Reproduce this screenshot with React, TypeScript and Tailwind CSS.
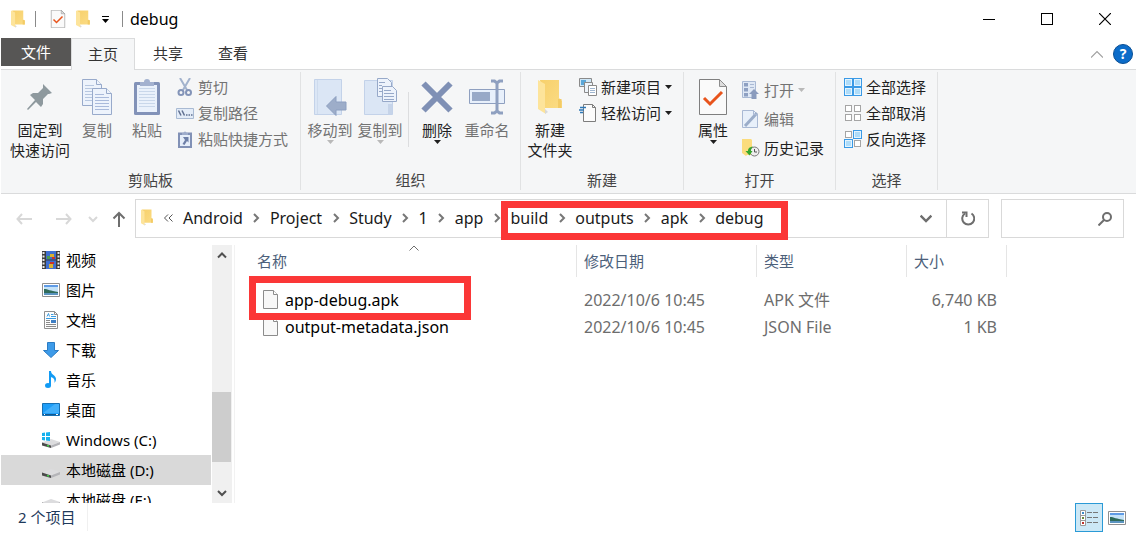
import type { ReactNode } from 'react'

const crumbs = ['Android', 'Project', 'Study', '1', 'app', 'build', 'outputs', 'apk', 'debug']

const files = [
  { name: 'app-debug.apk', date: '2022/10/6 10:45', type: 'APK 文件', size: '6,740 KB' },
  { name: 'output-metadata.json', date: '2022/10/6 10:45', type: 'JSON File', size: '1 KB' },
]

/* ---------- small glyphs ---------- */

function DownArrow({ className = '' }: { className?: string }) {
  return (
    <svg className={className} width="7" height="4" viewBox="0 0 7 4" fill="currentColor">
      <path d="M0 0h7L3.500 4z" />
    </svg>
  )
}

function Chevron({ d, size = 10, width = 2 }: { d: string; size?: number; width?: number }) {
  return (
    <svg width={size} height={size} viewBox="0 0 10 10" fill="none" stroke="currentColor" strokeWidth={width}>
      <path d={d} />
    </svg>
  )
}

function FolderIcon({ className = '' }: { className?: string }) {
  return (
    <svg className={className} viewBox="0 0 24 36" preserveAspectRatio="none">
      <defs>
        <linearGradient id="folderBack" x1="0" y1="0" x2="1" y2="1">
          <stop offset="0" stopColor="#f7d06b" />
          <stop offset="1" stopColor="#fbdc85" />
        </linearGradient>
      </defs>
      <path d="M2 1h19v18l3 3v7H6z" fill="url(#folderBack)" />
      <path d="M20 20h3.500v9H20z" fill="#f3cb66" />
      <path d="M0 1l7 4v25l1 5-8-5z" fill="#fde49b" />
      <path d="M7 30v5l3-2z" fill="#d8d8d8" />
    </svg>
  )
}

function PropertiesIcon({ className = '' }: { className?: string }) {
  return (
    <svg className={className} viewBox="0 0 28 36">
      <path d="M.5.500h20l7 7v28H.500z" fill="#fafafa" stroke="#7f7f7f" />
      <path d="M20.500.500v7h7z" fill="#ddd" stroke="#8d8d8d" />
      <path d="M5 19l6 6L23 13" fill="none" stroke="#e8541c" strokeWidth="3" />
    </svg>
  )
}

function PageIcon() {
  return (
    <svg className="shrink-0" width="15" height="19" viewBox="0 0 15 19">
      <path d="M.5.500h10l4 4v14H.500z" fill="#f8f8f8" stroke="#8c8c8c" />
      <path d="M10.500.500v4h4" fill="#fff" stroke="#8c8c8c" />
    </svg>
  )
}

function PinIcon() {
  return (
    <svg width="28" height="28" viewBox="0 0 28 28" fill="#8e999e">
      <path d="M17 1l9 9-3 1-1 0-5 5v5l-2 3-5-5L2 27l-1-1 8-9-5-5 3-2h5l5-5V4z" />
    </svg>
  )
}

function CopyIcon() {
  return (
    <svg width="32" height="38" viewBox="0 0 32 38" stroke="#98aacb" fill="#edf3fc">
      <path d="M1.500 1.500h14l5 5v21h-19z" />
      <path d="M15.500 1.500v5h5" />
      <path d="M4 7.500h9M4 10.500h13M4 13.500h8M4 16.500h8M4 19.500h8M4 22.500h8" stroke="#b7c7e0" />
      <path d="M11.500 10.500h14l5 5v21h-19z" />
      <path d="M25.500 10.500v5h5" />
      <path d="M14 16.500h9M14 19.500h14M14 22.500h14M14 25.500h14M14 28.500h14M14 31.500h14" stroke="#a9badb" />
    </svg>
  )
}

function PasteIcon() {
  return (
    <svg width="28" height="38" viewBox="0 0 28 38">
      <rect x="1" y="4" width="26" height="33" rx="1.500" fill="#8292b8" />
      <path d="M4 7h20v27H4z" fill="#eaf1fb" />
      <path d="M6 10.500h16M6 13.500h16M6 16.500h16M6 19.500h16M6 22.500h16M6 25.500h16M6 28.500h16" stroke="#c9d7ea" />
      <path d="M7 4h4a3 3 0 0 1 6 0h4v4H7z" fill="#a3b1cf" />
    </svg>
  )
}

function MoveToIcon() {
  return (
    <svg width="34" height="38" viewBox="0 0 34 38">
      <path d="M1.500 1.500h27v35h-27z" fill="#dbe6f5" stroke="#c3d2e9" />
      <path d="M4.500 2v34" stroke="#cedbed" />
      <path d="M13.500 28L23 18.500V24h10v8H23v5.500z" fill="#9dadc9" stroke="#8d9fc0" />
    </svg>
  )
}

function CopyToIcon() {
  return (
    <svg width="34" height="38" viewBox="0 0 34 38">
      <path d="M1.500 2.500h28v34h-28z" fill="#dbe6f5" stroke="#c3d2e9" />
      <path d="M25 26h4v10h-4z" fill="#c6d4e9" />
      <g fill="#edf3fc" stroke="#97a9c9">
        <path d="M14.500.500h10l4 4v14h-14z" />
        <path d="M16 4.500h6M16 7.500h3M16 10.500h3M16 13.500h3" />
        <path d="M19.500 8.500h10l4 4v11h-14z" />
        <path d="M21 12.500h7M21 15.500h10M21 18.500h10M21 21.500h10" />
      </g>
    </svg>
  )
}

function DeleteIcon() {
  return (
    <svg width="32" height="34" viewBox="0 0 32 34" fill="none" stroke="#7f90b5" strokeWidth="6">
      <path d="M2.500 3.500l27 27M29.500 3.500l-27 27" />
    </svg>
  )
}

function RenameIcon() {
  return (
    <svg width="36" height="36" viewBox="0 0 36 36" fill="none" stroke="#8fa0c0">
      <path d="M.5 10.500h35v14H.500z" fill="#e8f0fb" />
      <path d="M3 13h18v9H3z" fill="#98a9c7" stroke="none" />
      <path d="M22 2h3.500L28 4v28l-2.500 2H22M34 2h-3.500L28 4M28 32l2.500 2H34" strokeWidth="3" />
    </svg>
  )
}

/* ---------- 18px icons ---------- */

function Icon18({ children }: { children: ReactNode }) {
  return (
    <svg className="shrink-0" width="18" height="18" viewBox="0 0 18 18" fill="none">
      {children}
    </svg>
  )
}

const cutIcon = (
  <Icon18>
    <path d="M4 0l7 12M14 0L7 12" stroke="#a3b3cd" strokeWidth="2" />
    <circle cx="5" cy="14.500" r="2.500" stroke="#8394b8" strokeWidth="2" />
    <circle cx="12.500" cy="14.500" r="2.500" stroke="#8394b8" strokeWidth="2" />
  </Icon18>
)

const pathIcon = (
  <Icon18>
    <path d="M.5 4.500h17v10H.500z" fill="#e3ecf8" stroke="#a9bad3" />
    <path d="M2.500 6.500l2.500 5M6 6.500l2.500 5" stroke="#5f6f90" strokeWidth="1.500" />
    <path d="M10 11h1.500M12.500 11H14M15 11h1.500" stroke="#5f6f90" strokeWidth="1.500" />
  </Icon18>
)

const pasteLinkIcon = (
  <Icon18>
    <path d="M2 2.500h14V18H2z" fill="#8191b6" />
    <path d="M4 5h10v11H4z" fill="#e6eefa" />
    <path d="M6 3h1.500a1.500 1.500 0 0 1 3 0H12v2H6z" fill="#9eaccb" />
    <path d="M7 7h5.500v5.500L11 11l-2.500 4-2-1 2.500-4z" fill="#6d7fa8" />
  </Icon18>
)

const newItemIcon = (
  <Icon18>
    <path d="M.5.500h12v8H.500z" fill="#cfe7f7" stroke="#8a8a8a" />
    <path d="M2 2h5v5H2z" fill="#5aa7d8" />
    <path d="M5.500 4.500h8v10h-8z" fill="#eef4fa" stroke="#8a8a8a" />
    <path d="M9.500 7.500h8v10h-8z" fill="#fff" stroke="#8a8a8a" />
    <path d="M11 10.500h5M11 12.500h5M11 14.500h5" stroke="#9fb6d0" />
  </Icon18>
)

const easyAccessIcon = (
  <Icon18>
    <path d="M4.500.500h9l3 3v14h-12z" fill="#fbfbfb" stroke="#7d7d7d" />
    <path d="M13.500.500v3h3" stroke="#7d7d7d" />
    <path d="M1 3.500h6M0 6h5M1 8.500h3" stroke="#2f78b7" strokeWidth="1.500" />
  </Icon18>
)

const openIcon = (
  <Icon18>
    <path d="M.5.500h13v16H.500z" fill="#dfe8f5" stroke="#a9b9d4" />
    <path d="M2 2h4v3.500H2zM2 7h4v3.500H2zM2 12h4v3.500H2z" fill="#8ea0c2" />
    <path d="M8 3.500h4M8 6.500h4" stroke="#a9b9d4" />
    <path d="M12 8l5 5h-2.500v5h-5v-5H7z" fill="#8a9bbd" />
  </Icon18>
)

const editIcon = (
  <Icon18>
    <path d="M.5.500h11l4 4v13H.500z" fill="#e8f0fa" stroke="#a9b9d4" />
    <path d="M3 16L15 3" stroke="#9badc9" strokeWidth="3" />
    <path d="M11.500.500v4h4" stroke="#a9b9d4" />
  </Icon18>
)

const historyIcon = (
  <Icon18>
    <path d="M0 0h9l1 1v15H5l-1 1-4-3z" fill="#fbdc7d" />
    <circle cx="12.500" cy="12.500" r="4.500" fill="#eee" stroke="#777" />
    <path d="M12.500 10v3h2.500" stroke="#555" />
    <path d="M11 7.500C7 8 6 10 6 12H3.500l4 4.500 3-4.500H9c0-2 .5-3 2-4.500z" fill="#36a72f" />
  </Icon18>
)

function SelectIcon({ on }: { on: boolean[] }) {
  const at = [[0, 0], [9, 0], [0, 9], [9, 9]]
  return (
    <Icon18>
      {at.map(([x, y], i) =>
        on[i] ? (
          <g key={i}>
            <rect x={x} y={y} width="9" height="9" fill="#3a9ae6" />
            <rect x={x + 1} y={y + 1} width="7" height="7" fill="#e4f4fe" />
            <rect x={x + 2} y={y + 2} width="5" height="5" fill="#aedcf9" />
          </g>
        ) : (
          <rect key={i} x={x + 1.5} y={y + 1.5} width="6" height="6" fill="#fff" stroke="#a5a5a5" />
        )
      )}
    </Icon18>
  )
}

const videoIcon = (
  <Icon18>
    <path d="M0 0h18v18H0z" fill="#3d3d3d" />
    <path d="M4 0h10v8.500H4zM4 9.500h10V18H4z" fill="#3f6fd0" />
    <path d="M8 3h4v3H8zM7 13h4v4H7z" fill="#d9b233" />
    <path d="M10 6h3v2h-3zM8 11h4v2H8z" fill="#c8322c" />
    <path d="M5 5h3v3H5z" fill="#4b9e4b" />
    <path d="M1.500 1v16M16.500 1v16" stroke="#e8e8e8" strokeWidth="2" strokeDasharray="2 1.500" />
  </Icon18>
)

const pictureIcon = (
  <Icon18>
    <path d="M.5 2.500h17v13H.500z" fill="#fff" stroke="#8f8f8f" />
    <path d="M2 4h14v10H2z" fill="#c4e2f8" />
    <path d="M2 4h14v2H2z" fill="#5f9be6" />
    <path d="M2 8c4 0 6 2 14 3v1H2z" fill="#2f6b5a" />
    <path d="M2 12h14v2H2z" fill="#5b94c0" />
  </Icon18>
)

const docIcon = (
  <Icon18>
    <path d="M2.500.500h10l3 3v14h-13z" fill="#fdfdfd" stroke="#8f8f8f" />
    <path d="M12.500.500v3h3" stroke="#8f8f8f" />
    <path d="M5 5.500l1.500-3 1 3M9 3.500h2.500M9 5.500h5M4 7.500h10" stroke="#3a9be0" />
    <path d="M4 9.500h4M4 11.500h4M4 13.500h10M4 15.500h10" stroke="#8a8a8a" />
    <path d="M9 9h5v3H9z" fill="#3f7fc4" />
  </Icon18>
)

const downloadIcon = (
  <Icon18>
    <path d="M5.500 1.500h7v8h4L9 16.500l-7.500-7h4z" fill="#3d9be9" stroke="#2b7cc4" />
  </Icon18>
)

const musicIcon = (
  <Icon18>
    <ellipse cx="6" cy="14.500" rx="3" ry="2.500" fill="#129bf4" />
    <path d="M7 0h2c0 4 5 4 5 8 0 2-1 3-1.500 4 .5-4-1-5-3.500-6v9H7z" fill="#129bf4" />
  </Icon18>
)

const desktopIcon = (
  <Icon18>
    <path d="M.5 2.500h17v12H.500z" fill="#1e9df7" stroke="#1670b4" />
    <path d="M1 12L13 3h4v9z" fill="#43b0fb" />
    <path d="M1 13.500h16" stroke="#13568c" />
    <path d="M2 13.500h1M14 13.500h2" stroke="#fff" />
  </Icon18>
)

const driveShape = (
  <>
    <path d="M0 11.500L9 8l9 3-9 3.500z" fill="#dcdcde" />
    <path d="M0 11.500l9 3V17l-9-2.500z" fill="#4a4a4a" />
    <path d="M9 14.500l9-3.500v2.500L9 17z" fill="#b4b4b8" />
    <path d="M5 14.500l2 .5" stroke="#44d04a" strokeWidth="1.500" />
  </>
)

const driveIcon = <Icon18>{driveShape}</Icon18>

const winDriveIcon = (
  <Icon18>
    {driveShape}
    <path d="M0 2l3-.5V5H0zM4 1.500L8 1v4H4zM0 6h3v3.500L0 9zM4 6h4v4l-4-.5z" fill="#17b1ee" />
  </Icon18>
)

const places = [
  { label: '视频', icon: videoIcon },
  { label: '图片', icon: pictureIcon },
  { label: '文档', icon: docIcon },
  { label: '下载', icon: downloadIcon },
  { label: '音乐', icon: musicIcon },
  { label: '桌面', icon: desktopIcon },
  { label: 'Windows (C:)', icon: winDriveIcon },
  { label: '本地磁盘 (D:)', icon: driveIcon, active: true },
  { label: '本地磁盘 (E:)', icon: driveIcon },
]

/* ---------- ribbon ---------- */

function Group({ title, children }: { title: string; children: ReactNode }) {
  return (
    <section className="flex flex-col border-r border-[#e1e2e3]">
      <div className="flex h-[98px] items-start">{children}</div>
      <h2 className="text-center leading-5 text-[#444]">{title}</h2>
    </section>
  )
}

type BigProps = { icon: ReactNode; lines: string[]; off?: boolean; arrow?: boolean; wide?: boolean }

function BigButton({ icon, lines, off, arrow, wide }: BigProps) {
  return (
    <button
      disabled={off}
      className={`flex flex-col items-center pt-1 text-[#1f1f1f] disabled:text-[#737373] ${wide ? 'w-[60px]' : 'w-[50px]'}`}
    >
      <span className="flex h-11 items-center pb-0.5">{icon}</span>
      {lines.map((l) => (
        <span key={l} className="whitespace-nowrap leading-5">{l}</span>
      ))}
      {arrow && <DownArrow className={off ? 'text-[#b9b9b9]' : ''} />}
    </button>
  )
}

type SmallProps = { icon: ReactNode; label: string; off?: boolean; arrow?: boolean; tall?: boolean }

function SmallButton({ icon, label, off, arrow, tall }: SmallProps) {
  return (
    <button
      disabled={off}
      className={`flex items-center gap-1 text-[#1f1f1f] disabled:text-[#737373] ${tall ? 'h-[29px]' : 'h-[26px]'}`}
    >
      {icon}
      <span className="whitespace-nowrap leading-5">{label}</span>
      {arrow && <DownArrow className={off ? 'text-[#b9b9b9]' : ''} />}
    </button>
  )
}

function Ribbon() {
  return (
    <div className="flex border-b border-[#dadbdc] bg-[#f5f6f7] pt-0.5 pb-[3px]">
      <Group title="剪贴板">
        <div className="flex pl-[9px]">
          <BigButton wide icon={<PinIcon />} lines={['固定到', '快速访问']} />
          <div className="ml-0.5 flex">
            <BigButton off icon={<CopyIcon />} lines={['复制']} />
            <BigButton off icon={<PasteIcon />} lines={['粘贴']} />
          </div>
        </div>
        <div className="flex flex-col pt-0.5 pl-1 pr-3">
          <SmallButton off icon={cutIcon} label="剪切" />
          <SmallButton off icon={pathIcon} label="复制路径" />
          <SmallButton off icon={pasteLinkIcon} label="粘贴快捷方式" />
        </div>
      </Group>
      <Group title="组织">
        <div className="flex pl-1">
          <BigButton off arrow icon={<MoveToIcon />} lines={['移动到']} />
          <BigButton off arrow icon={<CopyToIcon />} lines={['复制到']} />
        </div>
        <div className="mx-[3px] mt-5 h-[55px] w-px bg-[#dcdddf]" />
        <div className="flex pr-2">
          <BigButton arrow icon={<DeleteIcon />} lines={['删除']} />
          <BigButton off icon={<RenameIcon />} lines={['重命名']} />
        </div>
      </Group>
      <Group title="新建">
        <div className="flex pl-1">
          <BigButton icon={<FolderIcon className="h-9 w-6" />} lines={['新建', '文件夹']} />
        </div>
        <div className="flex flex-col pt-0.5 pl-1 pr-[11px]">
          <SmallButton arrow icon={newItemIcon} label="新建项目" />
          <SmallButton arrow icon={easyAccessIcon} label="轻松访问" />
        </div>
      </Group>
      <Group title="打开">
        <div className="flex pl-1">
          <BigButton arrow icon={<PropertiesIcon className="h-9 w-7" />} lines={['属性']} />
        </div>
        <div className="flex flex-col pt-[3px] pl-1 pr-[11px]">
          <SmallButton off arrow tall icon={openIcon} label="打开" />
          <SmallButton off tall icon={editIcon} label="编辑" />
          <SmallButton tall icon={historyIcon} label="历史记录" />
        </div>
      </Group>
      <Group title="选择">
        <div className="flex flex-col pt-0.5 pl-2 pr-[11px]">
          <SmallButton icon={<SelectIcon on={[true, true, true, true]} />} label="全部选择" />
          <SmallButton icon={<SelectIcon on={[false, false, false, false]} />} label="全部取消" />
          <SmallButton icon={<SelectIcon on={[false, true, true, false]} />} label="反向选择" />
        </div>
      </Group>
    </div>
  )
}

/* ---------- window parts ---------- */

function TitleBar() {
  return (
    <header className="flex h-[38px] items-center pr-0.5">
      <div className="flex flex-1 items-center pl-2.5">
        <FolderIcon className="h-[18px] w-3.5" />
        <span className="ml-2.5 h-4 w-px bg-[#8a8a8a]" />
        <PropertiesIcon className="ml-3.5 h-[18px] w-4" />
        <FolderIcon className="ml-2.5 h-[18px] w-3.5" />
        <button aria-label="自定义快速访问工具栏" className="ml-3 w-2">
          <svg width="7" height="7" viewBox="0 0 7 7">
            <path d="M0 0h7v1H0zM0 3h7L3.500 7z" />
          </svg>
        </button>
        <span className="ml-3 h-4 w-px bg-[#8a8a8a]" />
        <h1 className="ml-[7px] text-base">debug</h1>
      </div>
      <button aria-label="最小化" className="flex w-[58px] justify-center">
        <span className="h-px w-3 bg-black" />
      </button>
      <button aria-label="最大化" className="flex w-[58px] justify-center">
        <span className="h-3 w-3 border border-black" />
      </button>
      <button aria-label="关闭" className="flex w-[58px] justify-center">
        <Chevron d="M0 0l10 10M10 0L0 10" size={12} width={1} />
      </button>
    </header>
  )
}

function Tabs() {
  return (
    <nav className="flex h-8 border-b border-[#dadbdc] text-[#333]">
      <button className="h-7 w-[70px] bg-[#575655] text-white">文件</button>
      <button className="h-8 w-16 border border-b-0 border-[#dadbdc] bg-[#f5f6f7]">主页</button>
      <button className="w-[66px]">共享</button>
      <button className="w-16">查看</button>
      <div className="ml-auto flex items-center gap-2.5 pr-[3px]">
        <button aria-label="折叠功能区" className="text-[#a0a0a0]">
          <Chevron d="M0 8l5-5 5 5" size={12} width={1} />
        </button>
        <button aria-label="帮助" className="h-5 w-5 rounded-full border border-[#0a4f94] bg-[#0c6cc9] text-sm leading-4 font-bold text-white">
          ?
        </button>
      </div>
    </nav>
  )
}

function AddressRow() {
  return (
    <div className="flex pt-[5px] pr-3 pb-[7px]">
      <div className="flex w-[134px] items-center text-[#d8d8d8]">
        <button aria-label="后退" className="ml-[15px]">
          <svg width="16" height="12" viewBox="0 0 16 12" fill="none" stroke="currentColor" strokeWidth="2">
            <path d="M16 6H1.500M6 1L1.500 6 6 11" />
          </svg>
        </button>
        <button aria-label="前进" className="ml-6">
          <svg width="16" height="12" viewBox="0 0 16 12" fill="none" stroke="currentColor" strokeWidth="2">
            <path d="M0 6h14.500M10 1l4.500 5-4.500 5" />
          </svg>
        </button>
        <button aria-label="最近浏览的位置" className="ml-4">
          <Chevron d="M1 3l4 4 4-4" />
        </button>
        <button aria-label="上移" className="ml-3.5 text-[#6e6e6e]">
          <svg width="14" height="16" viewBox="0 0 14 16" fill="none" stroke="currentColor" strokeWidth="2">
            <path d="M7 16V2M1.500 7.500L7 2l5.500 5.500" />
          </svg>
        </button>
      </div>
      <div className="relative flex h-[39px] flex-1 items-center border border-[#d9d9d9] pb-0.5">
        <FolderIcon className="ml-[5px] h-[17px] w-3" />
        <span className="flex w-[30px] justify-center text-[#555]">
          <svg width="9" height="8" viewBox="0 0 9 8" fill="none" stroke="currentColor">
            <path d="M4 .5L.5 4 4 7.500M8.500.500L5 4l3.500 3.500" />
          </svg>
        </span>
        {crumbs.map((c, i) => (
          <div key={c} className="flex items-center">
            {i > 0 && (
              <span className="flex w-[27px] justify-center text-[#777]">
                <Chevron d="M3 1l4 4-4 4" />
              </span>
            )}
            <a href="#" className="text-base text-[#1a1a1a]">{c}</a>
          </div>
        ))}
        <button aria-label="上一个位置" className="mr-3.5 ml-auto text-[#6e6e6e]">
          <Chevron d="M.5 3L5 7.500 9.500 3" size={12} />
        </button>
        <div className="pointer-events-none absolute top-[1px] left-[365px] h-[39px] w-[287px] border-[7px] border-[#fb3737]" />
      </div>
      <button aria-label="刷新" className="flex w-[42px] items-center justify-center border border-l-0 border-[#d9d9d9] text-[#6e6e6e]">
        <svg width="14" height="15" viewBox="0 0 14 15" fill="none" stroke="currentColor" strokeWidth="2">
          <path d="M10.500 2.500A6 6 0 1 1 4 2.500" />
          <path d="M1 1.500h4.500V6" />
        </svg>
      </button>
      <label className="ml-3 flex w-[123px] items-center border border-[#d9d9d9] pr-[11px] text-[#6e6e6e]">
        <input aria-label="搜索" className="w-full min-w-0 outline-none" />
        <svg className="shrink-0" width="14" height="14" viewBox="0 0 14 14" fill="none" stroke="currentColor" strokeWidth="2">
          <circle cx="9" cy="5" r="4" />
          <path d="M6 8L.5 13.500" />
        </svg>
      </label>
    </div>
  )
}

function Sidebar() {
  return (
    <aside className="flex w-[234px] shrink-0 border-r border-[#f2f2f2]">
      <ul className="flex-1 overflow-hidden">
        {places.map((p) => (
          <li key={p.label}>
            <a href="#" className={`flex h-[30px] items-center gap-1.5 pl-[41px] ${p.active ? 'bg-[#d9d9d9]' : ''}`}>
              {p.icon}
              <span className="whitespace-nowrap">{p.label}</span>
            </a>
          </li>
        ))}
      </ul>
      <div className="mr-0.5 ml-px flex w-5 flex-col bg-[#f0f0f0] text-[#505050]">
        <button aria-label="向上滚动" className="flex h-5 items-center justify-center">
          <Chevron d="M1 7.500l4-4 4 4" />
        </button>
        <div className="flex flex-1 flex-col justify-end pb-[21px]">
          <div className="mr-px h-[70px] bg-[#cdcdcd]" />
        </div>
        <button aria-label="向下滚动" className="flex h-5 items-center justify-center">
          <Chevron d="M1 3l4 4 4-4" />
        </button>
      </div>
    </aside>
  )
}

function FileList() {
  const head = 'h-8 border-r border-[#e5e5e5] pl-[7px] leading-8'
  return (
    <main className="relative flex-1 pl-[15px]">
      <table className="table-fixed border-collapse text-left">
        <colgroup>
          <col className="w-[327px]" />
          <col className="w-[180px]" />
          <col className="w-[150px]" />
          <col className="w-[100px]" />
        </colgroup>
        <thead className="text-[#4c607a]">
          <tr>
            <th className="relative p-0 pb-[9px] font-normal">
              <div className={head}>名称</div>
              <span className="absolute inset-x-0 top-0 flex justify-center text-[#6e6e6e]">
                <Chevron d="M.5 5.500L5 1l4.500 4.500" width={1} />
              </span>
            </th>
            <th className="p-0 pb-[9px] font-normal"><div className={head}>修改日期</div></th>
            <th className="p-0 pb-[9px] font-normal"><div className={head}>类型</div></th>
            <th className="p-0 pb-[9px] font-normal"><div className={head}>大小</div></th>
          </tr>
        </thead>
        <tbody className="text-base text-[#6d6d6d]">
          {files.map((f) => (
            <tr key={f.name} className="h-[27px]">
              <td className="p-0 pl-[13px]">
                <div className="flex items-center gap-[7px] text-black">
                  <PageIcon />
                  {f.name}
                </div>
              </td>
              <td className="p-0 pl-[7px]">{f.date}</td>
              <td className="p-0 pl-[7px]">{f.type}</td>
              <td className="p-0 pr-2.5 text-right">{f.size}</td>
            </tr>
          ))}
        </tbody>
      </table>
      <div className="pointer-events-none absolute top-[31px] left-3.5 h-11 w-[222px] border-[7px] border-[#fb3737]" />
    </main>
  )
}

function StatusBar() {
  return (
    <footer className="flex h-[30px] items-start pr-2.5">
      <span className="border-r border-[#f0f0f0] pr-3 pl-[17px] leading-7 text-[#1e395b]">2 个项目</span>
      <button aria-label="详细信息" className="ml-auto flex h-[29px] w-7 items-center justify-center border border-[#2a9ad6] bg-[#cce8f6]">
        <svg width="18" height="16" viewBox="0 0 18 16" fill="none">
          <path d="M.5.500h5v15h-5zM.5 5.500h5M.5 10.500h5" fill="#fff" stroke="#9a9a9a" />
          <path d="M2 2h2v2H2z" fill="#3a8ac8" />
          <path d="M2 7h2v2H2z" fill="#6a8a3a" />
          <path d="M2 12h2v2H2z" fill="#c03028" />
          <path d="M7 2.500h5M13 2.500h5M7 7.500h5M13 7.500h5M7 12.500h5M13 12.500h5" stroke="#777" />
        </svg>
      </button>
      <button aria-label="大缩略图" className="ml-[5px] flex h-[29px] items-center">{pictureIcon}</button>
    </footer>
  )
}

function App() {
  return (
    <div className="flex h-screen flex-col overflow-hidden bg-white px-px font-['Noto_Sans','Noto_Sans_CJK_SC',sans-serif] text-[15px] text-black">
      <TitleBar />
      <Tabs />
      <Ribbon />
      <AddressRow />
      <div className="flex min-h-0 flex-1">
        <Sidebar />
        <FileList />
      </div>
      <StatusBar />
    </div>
  )
}

export default App
